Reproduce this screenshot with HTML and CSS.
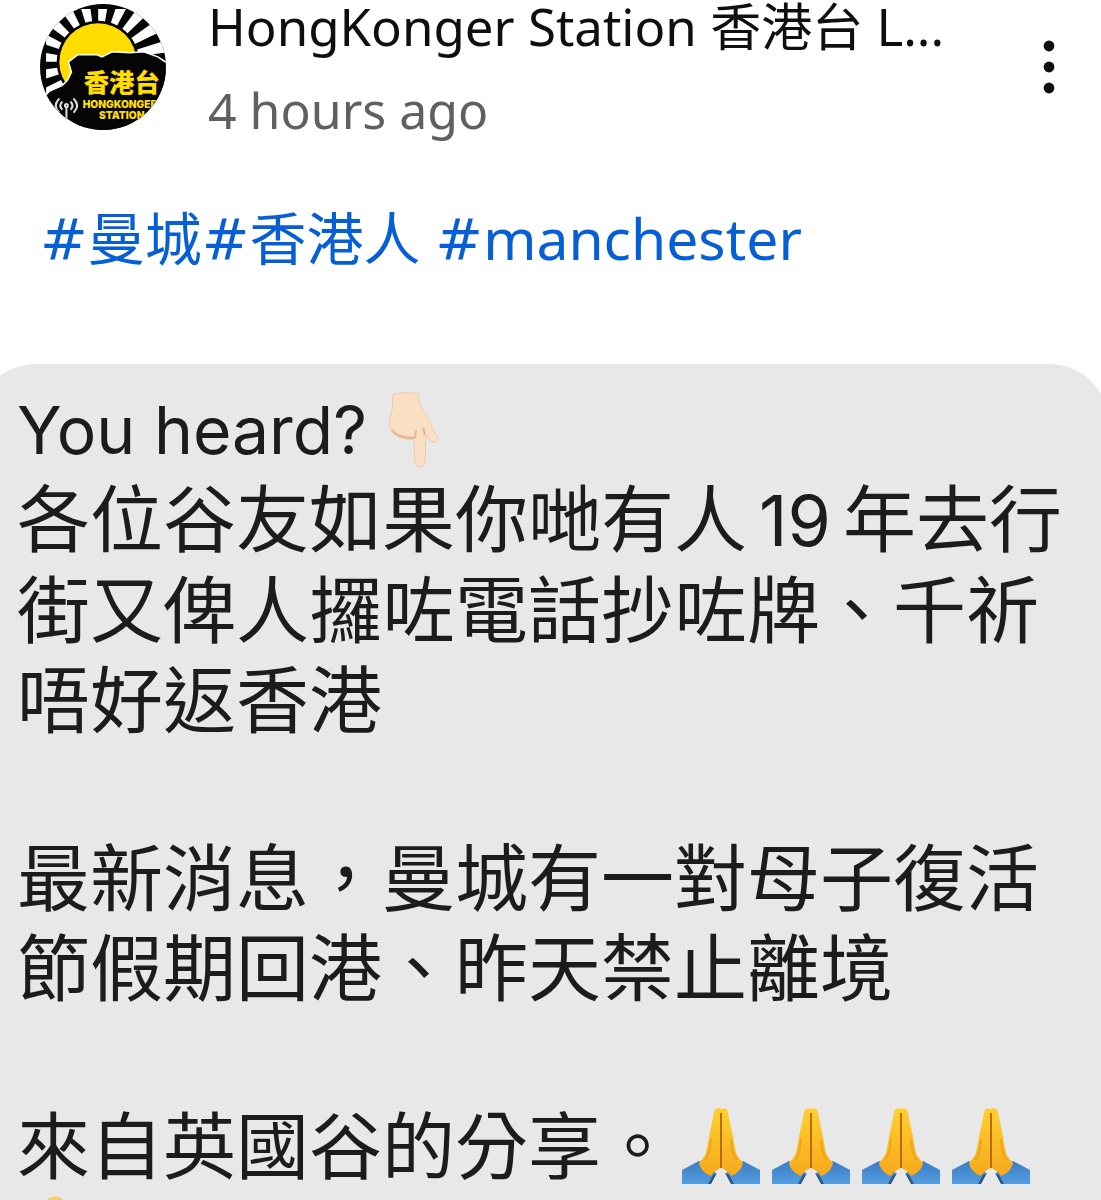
FILE: index.html
```html
<!DOCTYPE html>
<html lang="zh-Hant">
  <head>
    <meta charset="UTF-8" />
    <meta name="viewport" content="width=device-width, initial-scale=1.0" />
    <title>HongKonger Station 香港台</title>
    <link rel="stylesheet" href="styles.css">
  </head>
  <body>
    <svg class="symbols" width="0" height="0" aria-hidden="true">
      <defs>
        <linearGradient id="skin" x1="0" y1="0" x2="0" y2="1">
          <stop offset="0" stop-color="#ffd02f" />
          <stop offset="1" stop-color="#f7a91c" />
        </linearGradient>
        <linearGradient id="sleeve" x1="0" y1="0" x2="0" y2="1">
          <stop offset="0" stop-color="#3a7cc4" />
          <stop offset="1" stop-color="#559ddf" />
        </linearGradient>
        <symbol id="pray" viewBox="0 0 78 78">
          <path d="M0 63 L17 54 L34 66 L28 77 H0 Z" fill="url(#sleeve)" />
          <path d="M78 63 L61 54 L44 66 L50 77 H78 Z" fill="url(#sleeve)" />
          <path d="M31 68 L26 77 H29 L35 66 Z M47 68 L52 77 H49 L43 66 Z" fill="#2c5683" />
          <path d="M39 2 C35 0 32 2 32 6 L27 30 C25 41 25 45 22 50 L17 56 C18 62 23 67 29 69 C31 65 36 62 39 61 C42 62 47 65 49 69 C55 67 60 62 61 56 L56 50 C53 45 53 41 51 30 L46 6 C46 2 43 0 39 2 Z" fill="url(#skin)" />
          <path d="M29 32 C28 44 27 48 23 53 M49 32 C50 44 51 48 55 53" fill="none" stroke="#f0a31c" stroke-width="2" />
          <path d="M39 6 V61" stroke="#b96b12" stroke-width="2" />
        </symbol>
      </defs>
    </svg>

    <main class="post">
      <header class="post-header">
        <svg class="avatar" viewBox="0 0 124 124" role="img" aria-label="香港台 HongKonger Station">
          <defs>
            <clipPath id="disc"><circle cx="62" cy="62" r="62" /></clipPath>
            <clipPath id="frame"><rect x="6" y="5" width="118" height="119" /></clipPath>
          </defs>
          <g clip-path="url(#disc)">
            <rect width="124" height="124" fill="#050505" />
            <g clip-path="url(#frame)">
              <circle cx="57" cy="57" r="54" fill="none" stroke="#fff" stroke-width="27" stroke-dasharray="9 7.96" />
            </g>
            <circle cx="57" cy="57" r="38" fill="#ffdd00" />
            <path d="M-4 100 L9 86 L22 80 L27 75 L31 67 L28 57 L37 50 L56 50 L61 52 L71 47 L89 48 L102 47 L116 52 L128 60 V128 H-4 Z" fill="#050505" stroke="#fff" stroke-width="1.5" />
            <text class="logo-cjk" x="43" y="87">香港台</text>
            <text class="logo-latin" x="42" y="102">HONGKONGER</text>
            <text class="logo-latin" x="58" y="113">STATION</text>
            <g fill="none" stroke="#ddd" stroke-width="2">
              <path d="M19 93 Q12 100 19 107 M22 96 Q18 100 22 104 M30 96 Q34 100 30 104 M33 93 Q40 100 33 107 M26 101 V116" />
              <circle cx="26" cy="100" r="1.5" />
            </g>
          </g>
        </svg>
        <div class="post-meta">
          <h1 class="channel-name">HongKonger Station 香港台 L...</h1>
          <p class="post-time">4 hours ago</p>
        </div>
        <button class="menu-btn" type="button" aria-label="More actions">
          <svg width="12" height="54" viewBox="0 0 12 54" fill="#0f0f0f">
            <circle cx="6" cy="6" r="5.4" />
            <circle cx="6" cy="27" r="5.4" />
            <circle cx="6" cy="48" r="5.4" />
          </svg>
        </button>
      </header>

      <p class="hashtags"><a href="#"><span class="hash">#</span>曼城</a><a href="#"><span class="hash">#</span>香港人</a> <a href="#"><span class="hash">#</span>manchester</a></p>

      <article class="bubble">
        <p>
          <span class="latin">You heard?</span>
          <svg class="point" viewBox="0 0 52 76" role="img" aria-label="pointing down">
            <path d="M4 3 C12 0 24 0 31 2 C30 9 32 15 36 20 C41 25 42 32 45 38 L50 45 C52 49 47 52 43 49 L38 43 L37 70 C37 76 27 76 27 70 L26 47 C20 48 12 47 6 42 C0 38 1 30 3 22 C5 16 5 10 4 3 Z" fill="#fbdfc4" stroke="#eecbab" stroke-width="1" />
            <path d="M4 38 C9 45 18 46 26 46 M27 46 L28 38 M37 43 L35 36" fill="none" stroke="#e2b48f" stroke-width="2" />
          </svg><br />
          各位谷友如果你哋有人<span class="number">19</span>年去行<br />
          街又俾人攞咗電話抄咗牌、千祈<br />
          唔好返香港
        </p>
        <p>
          最新消息，曼城有一對母子復活<br />
          節假期回港、昨天禁止離境
        </p>
        <p>
          來自英國谷的分享。<span class="hands"><svg role="img" aria-label="folded hands"><use href="#pray" /></svg><svg aria-hidden="true"><use href="#pray" /></svg><svg aria-hidden="true"><use href="#pray" /></svg><svg aria-hidden="true"><use href="#pray" /></svg></span><br />
          <svg class="next" viewBox="0 0 78 78" aria-hidden="true">
            <path d="M30 6 C31 0 45 0 46 6 L50 40 H26 Z" fill="#f5cf62" />
          </svg>
        </p>
      </article>
    </main>
  </body>
</html>
```
FILE: styles.css
```css
:root {
  --text-color: #0f0f0f;
  --muted-color: #606060;
  --link-color: #065fd4;
  --bubble-color: #e8e8e8;
  --bubble-text: #1c1c1c;
}

* {
  margin: 0;
  padding: 0;
  box-sizing: border-box;
}

body {
  font-family: "Noto Sans", "Noto Sans CJK TC", sans-serif;
  background-color: white;
  color: var(--text-color);
}

.symbols {
  position: absolute;
}

.post {
  height: 100vh;
  overflow: hidden;
}

.post-header {
  display: flex;
  align-items: flex-start;
  padding: 0 40px;
}

.avatar {
  width: 126px;
  height: 126px;
  margin-top: 4px;
  flex-shrink: 0;
}

.logo-cjk {
  font-family: "Noto Sans CJK TC", sans-serif;
  font-size: 25px;
  font-weight: 900;
  fill: #ffdd00;
}

.logo-latin {
  font-family: Inter, sans-serif;
  font-size: 10px;
  font-weight: 900;
  fill: #ffdd00;
}

.post-meta {
  flex: 1;
  min-width: 0;
  padding-left: 42px;
}

.channel-name {
  font-size: 51px;
  font-weight: 400;
  line-height: 52px;
  white-space: nowrap;
}

.post-time {
  font-size: 50px;
  line-height: 72px;
  margin-top: 22px;
  color: var(--muted-color);
}

.menu-btn {
  display: flex;
  justify-content: center;
  width: 24px;
  margin-top: 40px;
  border: none;
  background: transparent;
  cursor: pointer;
}

.hashtags {
  padding: 0 40px;
  margin-top: 52px;
  font-size: 57px;
  line-height: 80px;
}

.hashtags a {
  color: var(--link-color);
  text-decoration: none;
}

.hash {
  font-family: "DejaVu Sans", sans-serif;
  font-size: 57px;
}

/* The bubble runs past both sides of the post */
.bubble {
  margin: 84px -8px 0 -24px;
  padding: 19px 24px 20px 41px;
  border-radius: 60px;
  background-color: var(--bubble-color);
  color: var(--bubble-text);
  font-family: Inter, "Noto Sans CJK TC", sans-serif;
  font-size: 73px;
  line-height: 90px;
  white-space: nowrap;
}

.bubble p + p {
  margin-top: 88px;
}

.latin {
  font-size: 66px;
}

.number {
  margin: 0 12px;
  font-size: 70px;
}

.point {
  width: 52px;
  height: 76px;
  vertical-align: -14px;
}

.hands {
  display: inline-flex;
  gap: 12px;
  margin-left: 8px;
  vertical-align: -12px;
}

.hands svg {
  width: 78px;
  height: 78px;
}

.next {
  width: 78px;
  height: 78px;
  vertical-align: -10px;
}
```
